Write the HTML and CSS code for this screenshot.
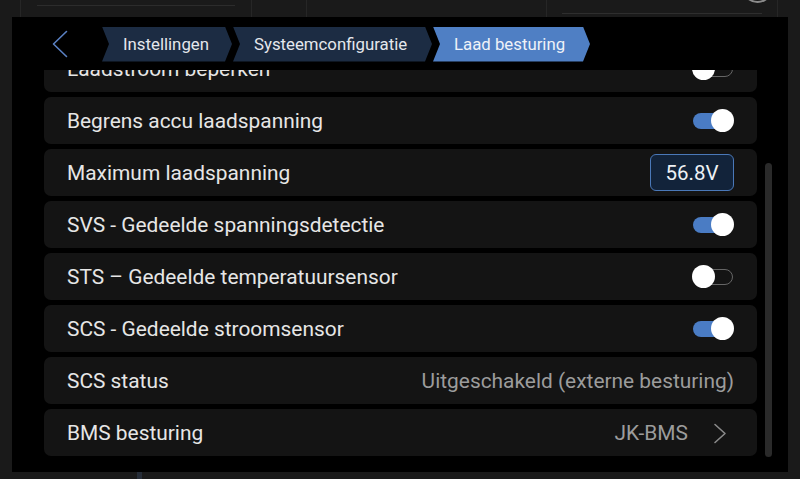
FILE: index.html
```html
<!DOCTYPE html>
<html lang="nl">
<head>
<meta charset="utf-8">
<title>Laad besturing</title>
<link rel="stylesheet" href="styles.css">
</head>
<body>
<div class="page">
  <div class="bg-top">
    <div class="bg-cell bg-c1"><div class="bg-hline"></div></div>
    <div class="bg-cell bg-c2"></div>
    <div class="bg-cell bg-c3"></div>
    <div class="bg-cell bg-c4"><div class="bg-hline2"></div></div>
    <div class="bg-ring"></div>
  </div>
  <div class="bg-bottom"><div class="bg-mark"></div></div>

  <div class="dialog">
    <div class="header">
      <svg class="back" width="16" height="28" viewBox="0 0 16 28">
        <polyline points="14.5,1.5 1.5,14 14.5,26.5" fill="none" stroke="#5a80c2" stroke-width="1.6" stroke-linecap="round" stroke-linejoin="round"/>
      </svg>
      <div class="crumbs">
        <div class="crumb">Instellingen</div>
        <div class="crumb">Systeemconfiguratie</div>
        <div class="crumb active">Laad besturing</div>
      </div>
    </div>
    <div class="viewport">
      <div class="list">
        <div class="row"><span class="label">Laadstroom beperken</span><span class="toggle off"><span class="track"></span><span class="knob"></span></span></div>
        <div class="row"><span class="label">Begrens accu laadspanning</span><span class="toggle on"><span class="track"></span><span class="knob"></span></span></div>
        <div class="row"><span class="label">Maximum laadspanning</span><span class="valuebox">56.8V</span></div>
        <div class="row"><span class="label">SVS - Gedeelde spanningsdetectie</span><span class="toggle on"><span class="track"></span><span class="knob"></span></span></div>
        <div class="row"><span class="label">STS – Gedeelde temperatuursensor</span><span class="toggle off"><span class="track"></span><span class="knob"></span></span></div>
        <div class="row"><span class="label">SCS - Gedeelde stroomsensor</span><span class="toggle on"><span class="track"></span><span class="knob"></span></span></div>
        <div class="row"><span class="label">SCS status</span><span class="value">Uitgeschakeld (externe besturing)</span></div>
        <div class="row"><span class="label">BMS besturing</span><span class="nav"><span class="value">JK-BMS</span><svg class="chev" width="14" height="21" viewBox="0 0 14 21"><polyline points="2,1.5 12,10.5 2,19.5" fill="none" stroke="#8a8a8a" stroke-width="1.6" stroke-linecap="round" stroke-linejoin="round"/></svg></span></div>
      </div>
      <div class="scrollbar"></div>
    </div>
  </div>
</div>
</body>
</html>
```

FILE: styles.css
```css
* { box-sizing: border-box; }
html, body {
  margin: 0;
  padding: 0;
  background: #1a1a1a;
  font-family: Roboto, "Liberation Sans", sans-serif;
}
.page {
  position: relative;
  width: 800px;
  height: 479px;
  overflow: hidden;
  background: #1a1a1a;
}

/* faint page behind the dialog */
.bg-top {
  display: flex;
  height: 17px;
  position: relative;
}
.bg-cell { height: 17px; position: relative; }
.bg-c1 { margin-left: 20px; width: 232px; border-left: 1px solid #262626; border-right: 1px solid #262626; }
.bg-hline { position: absolute; left: 16px; top: 5px; width: 198px; border-top: 1px solid #2c2c2c; }
.bg-c2 { width: 55px; border-right: 1px solid #262626; }
.bg-c3 { width: 240px; border-right: 1px solid #262626; }
.bg-c4 { width: 231px; border-right: 1px solid #262626; }
.bg-hline2 { position: absolute; left: 15px; top: 13px; width: 200px; border-top: 1px solid #2e2e2e; }
.bg-ring {
  position: absolute;
  left: 742px;
  top: -28px;
  width: 31px;
  height: 31px;
  border: 2px solid #8c8c8c;
  border-radius: 50%;
}
.bg-bottom { position: absolute; left: 0; top: 472px; width: 800px; height: 7px; }
.bg-mark { position: absolute; left: 137px; top: 0; width: 5px; height: 7px; background: #262d38; }

/* dialog */
.dialog {
  position: absolute;
  left: 12px;
  top: 17px;
  width: 776px;
  height: 455px;
  background: #000;
  display: flex;
  flex-direction: column;
}
.header {
  height: 53px;
  flex: none;
  display: flex;
  align-items: center;
  padding-left: 40px;
  background: #000;
}
.back { flex: none; margin-top: 1px; }
.crumbs {
  display: flex;
  margin-left: 34px;
  gap: 1px;
  margin-top: 1px;
}
.crumb {
  height: 35px;
  display: flex;
  align-items: center;
  padding: 0 20px 0 21px;
  background: #1c2c43;
  color: #e4e7ec;
  font-size: 16.8px;
  white-space: nowrap;
  clip-path: polygon(0 0, calc(100% - 7px) 0, 100% 50%, calc(100% - 7px) 100%, 0 100%, 7px 50%);
}
.crumb:nth-child(1) { width: 130px; }
.crumb:nth-child(2) { width: 199px; }
.crumb.active { width: 157px; background: #4f7fc4; color: #eef2f8; }

.viewport {
  flex: 1;
  overflow: hidden;
  display: flex;
  padding-left: 32px;
}
.list {
  width: 713px;
  flex: none;
  display: flex;
  flex-direction: column;
  gap: 5px;
  margin-top: -25px;
}
.row {
  height: 47px;
  flex: none;
  background: #141414;
  border-radius: 7px;
  display: flex;
  align-items: center;
  justify-content: space-between;
  padding: 0 23px 0 23px;
}
.label {
  color: #e6e6e6;
  font-size: 20.9px;
  letter-spacing: 0;
}
.value {
  color: #9c9c9c;
  font-size: 20.9px;
}
.nav { display: flex; align-items: center; }
.chev { margin-left: 25px; margin-right: 7px; margin-top: 2px; }

.toggle {
  position: relative;
  width: 42px;
  height: 24px;
  flex: none;
}
.track {
  position: absolute;
  left: 1px;
  right: 1px;
  top: 4px;
  height: 16px;
  border-radius: 8px;
}
.toggle.on .track { background: #4a7cc4; right: 6px; }
.toggle.off .track { border: 1.5px solid #666; left: 6px; }
.knob {
  position: absolute;
  top: 0;
  width: 23px;
  height: 23px;
  border-radius: 50%;
  background: #fff;
}
.toggle.on .knob { right: 0; }
.toggle.off .knob { left: 0; }

.valuebox {
  width: 84px;
  height: 37px;
  border: 1.5px solid #4a78b8;
  border-radius: 6px;
  background: #12233a;
  color: #eef1f5;
  font-size: 20.5px;
  display: flex;
  align-items: center;
  justify-content: center;
}

.scrollbar {
  flex: none;
  width: 7px;
  height: 294px;
  margin-left: 8px;
  margin-top: 93px;
  border-radius: 4px;
  background: #2a2a2a;
}
```
